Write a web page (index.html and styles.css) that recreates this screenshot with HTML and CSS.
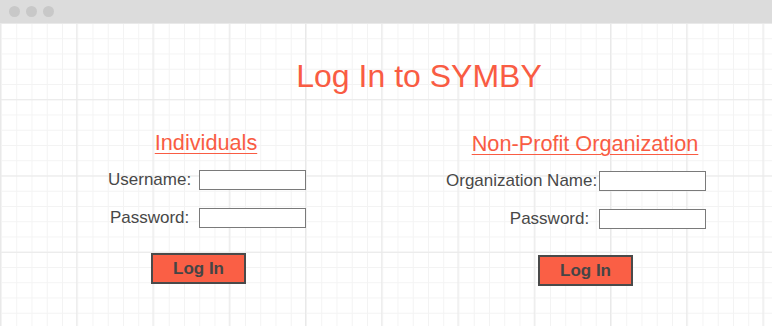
FILE: index.html
```html
<!DOCTYPE html>
<html lang="en">
<head>
    <meta charset="UTF-8">
    <meta name="viewport" content="width=device-width, initial-scale=1.0">
    <title>Log In to SYMBY</title>
    <link rel="stylesheet" href="styles.css">
</head>
<body>
    <div class="window-bar">
        <span class="dot"></span>
        <span class="dot"></span>
        <span class="dot"></span>
    </div>

    <div class="canvas">
        <h1 class="title">Log In to SYMBY</h1>

        <div class="columns">
            <div class="login-box individuals">
                <h2>Individuals</h2>
                <div class="fields">
                    <label for="username">Username:</label>
                    <input type="text" id="username">
                    <label for="password">Password:</label>
                    <input type="password" id="password">
                </div>
                <button class="login-btn">Log In</button>
            </div>

            <div class="login-box organization">
                <h2>Non-Profit Organization</h2>
                <div class="fields">
                    <label for="orgName">Organization Name:</label>
                    <input type="text" id="orgName">
                    <label for="orgPassword" class="pad-label">Password:</label>
                    <input type="password" id="orgPassword">
                </div>
                <button class="login-btn">Log In</button>
            </div>
        </div>
    </div>
</body>
</html>
```

FILE: styles.css
```css
body {
    font-family: "Liberation Sans", Arial, sans-serif;
    margin: 0;
    padding: 0;
    color: #484848;
}
.window-bar {
    height: 23px;
    background-color: #dcdcdc;
    display: flex;
    align-items: center;
    gap: 6px;
    padding-left: 9px;
}
.dot {
    width: 11px;
    height: 11px;
    border-radius: 50%;
    background-color: #c8c8c8;
}
.canvas {
    height: 303px;
    padding-top: 35px;
    box-sizing: border-box;
    background-color: #fff;
    background-image:
        linear-gradient(to right, #e9e9e9 1px, transparent 1px),
        linear-gradient(to bottom, #e9e9e9 1px, transparent 1px),
        linear-gradient(to right, #f3f3f3 1px, transparent 1px),
        linear-gradient(to bottom, #f3f3f3 1px, transparent 1px);
    background-size: 76.25px 76.25px, 76.25px 76.25px, 15.25px 15.25px, 15.25px 15.25px;
    background-position: 0 0, 0 0, 1px 0, 1px 0;
}
.title {
    margin: 0;
    padding-left: 66px;
    text-align: center;
    font-size: 32px;
    line-height: 36px;
    font-weight: normal;
    color: #f95c43;
}
.columns {
    display: flex;
    margin-top: 36px;
    padding-left: 108px;
}
.login-box {
    display: flex;
    flex-direction: column;
    align-items: flex-start;
}
.login-box h2 {
    align-self: stretch;
    margin: 0 0 14px;
    text-align: center;
    font-size: 21.7px;
    line-height: 26px;
    font-weight: normal;
    color: #f95c43;
    text-decoration: underline;
    text-decoration-thickness: 1px;
    text-underline-offset: 3px;
}
.individuals {
    width: 196px;
}
.organization {
    width: 278px;
    margin-left: 142px;
    padding-top: 1px;
}
.fields {
    display: grid;
    grid-template-columns: auto 107px;
    row-gap: 18px;
    align-items: center;
    font-size: 17px;
}
.individuals .fields {
    column-gap: 8px;
    justify-items: center;
}
.organization .fields {
    column-gap: 2px;
    justify-items: end;
}
.fields label {
    line-height: 20px;
}
.pad-label {
    padding-right: 8px;
}
.fields input {
    box-sizing: border-box;
    width: 107px;
    height: 20px;
    margin: 0;
    padding: 0 4px;
    border: 1px solid #7a7a7a;
    background: #fff;
    outline: none;
}
.login-btn {
    box-sizing: border-box;
    width: 95px;
    height: 31px;
    margin-top: 25px;
    padding: 0;
    background-color: #fa5f45;
    color: #454545;
    border: 2px solid #4a4a4a;
    font-family: "Liberation Sans", Arial, sans-serif;
    font-size: 17px;
    font-weight: bold;
    cursor: pointer;
}
.individuals .login-btn {
    margin-left: 43px;
}
.organization .login-btn {
    margin-left: 92px;
    margin-top: 26px;
}
```
